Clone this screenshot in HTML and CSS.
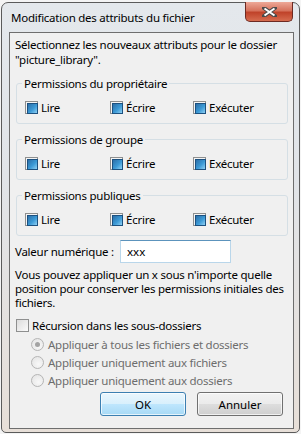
FILE: index.html
```html
<!DOCTYPE html>
<html lang="fr">
<head>
    <meta charset="UTF-8">
    <title>Modification des attributs du fichier</title>
    <link rel="stylesheet" href="styles.css">
</head>
<body>
    <div class="window">
        <div class="titlebar">
            <span class="title">Modification des attributs du fichier</span>
            <button class="close" title="Fermer">
                <svg width="15" height="10" viewBox="0 0 15 10">
                    <path d="M2 1 L13 9 M13 1 L2 9" stroke="#4a4a4a" stroke-width="4" stroke-linecap="square"/>
                    <path d="M2.5 1.5 L12.5 8.5 M12.5 1.5 L2.5 8.5" stroke="#ffffff" stroke-width="2"/>
                </svg>
            </button>
        </div>

        <div class="client">
            <p class="intro">Sélectionnez les nouveaux attributs pour le dossier<br>"picture_library".</p>

            <fieldset class="group">
                <legend>Permissions du propriétaire</legend>
                <div class="perms">
                    <label class="check"><span class="box on"></span>Lire</label>
                    <label class="check"><span class="box on"></span>Écrire</label>
                    <label class="check"><span class="box on"></span>Exécuter</label>
                </div>
            </fieldset>

            <fieldset class="group">
                <legend>Permissions de groupe</legend>
                <div class="perms">
                    <label class="check"><span class="box on"></span>Lire</label>
                    <label class="check"><span class="box on"></span>Écrire</label>
                    <label class="check"><span class="box on"></span>Exécuter</label>
                </div>
            </fieldset>

            <fieldset class="group">
                <legend>Permissions publiques</legend>
                <div class="perms">
                    <label class="check"><span class="box on"></span>Lire</label>
                    <label class="check"><span class="box on"></span>Écrire</label>
                    <label class="check"><span class="box on"></span>Exécuter</label>
                </div>
            </fieldset>

            <div class="value-row">
                <label class="value-label" for="mode">Valeur numérique :</label>
                <input class="value-input" id="mode" type="text" value="xxx">
            </div>

            <p class="hint">Vous pouvez appliquer un x sous n'importe quelle<br>position pour conserver les permissions initiales des<br>fichiers.</p>

            <label class="check recurse"><span class="box"></span>Récursion dans les sous-dossiers</label>

            <div class="radios">
                <label class="radio"><span class="dot on"></span>Appliquer à tous les fichiers et dossiers</label>
                <label class="radio"><span class="dot"></span>Appliquer uniquement aux fichiers</label>
                <label class="radio"><span class="dot"></span>Appliquer uniquement aux dossiers</label>
            </div>

            <div class="actions">
                <button class="button default">OK</button>
                <button class="button">Annuler</button>
            </div>
        </div>
    </div>
</body>
</html>
```

FILE: styles.css
```css
* {
    margin: 0;
    padding: 0;
    box-sizing: border-box;
}

body {
    font-family: "Noto Sans", "Open Sans", sans-serif;
    font-size: 11.5px;
    letter-spacing: -0.25px;
    line-height: 15px;
    color: #000;
    background: #f4f4f4;
}

/* window frame */
.window {
    width: 299px;
    height: 431px;
    margin: 2px 0 0 1px;
    padding: 0 5px 3px 7px;
    display: flex;
    flex-direction: column;
    border: 1px solid #5b5b5b;
    border-radius: 7px 7px 5px 5px;
    background: linear-gradient(to bottom, #e4e8ec 0%, #e1e4e8 40%, #e7dfd8 100%);
}

.titlebar {
    height: 29px;
    display: flex;
    align-items: flex-start;
    justify-content: space-between;
}

.title {
    padding: 7px 0 0 2px;
    white-space: nowrap;
}

.close {
    width: 48px;
    height: 20px;
    margin-right: 1px;
    margin-top: -1px;
    display: flex;
    align-items: center;
    justify-content: center;
    border: 1px solid #6d2a22;
    border-top: none;
    border-radius: 0 0 5px 5px;
    background: linear-gradient(to bottom, #eda897 0%, #d6735d 45%, #c0432a 55%, #d66c4f 100%);
}

/* dialog body */
.client {
    flex: 1;
    padding: 4px 5px 0 5px;
    border: 1px solid #6e6e6e;
    background: #f0f0f0;
    display: flex;
    flex-direction: column;
}

.intro {
    white-space: nowrap;
}

.group {
    margin: 9px 0 0 1px;
    padding: 9px 8px 8px 8px;
    border: 1px solid #d5dfe5;
    border-radius: 3px;
}

.group + .group {
    margin-top: 8px;
}

.group legend {
    margin-left: -3px;
    padding: 0 2px;
}

.perms {
    display: grid;
    grid-template-columns: 85px 83px auto;
}

.check {
    display: flex;
    align-items: center;
    gap: 3px;
    white-space: nowrap;
}

.box {
    width: 13px;
    height: 13px;
    flex: none;
    border: 1px solid #8e8f8f;
    background: linear-gradient(135deg, #dcdcdc, #fbfbfb);
}

.box.on {
    background: #f4f4f4;
    padding: 1px;
}

.box.on::after {
    content: "";
    display: block;
    width: 9px;
    height: 9px;
    border: 1px solid #1c5180;
    background: linear-gradient(135deg, #2c6fa8 0%, #3c9ad6 55%, #8fd0f3 100%);
}

.value-row {
    margin-top: 4px;
    display: flex;
    align-items: center;
}

.value-label {
    width: 105px;
    white-space: nowrap;
}

.value-input {
    width: 111px;
    height: 23px;
    padding: 0 6px;
    font: inherit;
    border: 1px solid #b9d6ea;
    border-top-color: #5c93bc;
    background: #fff;
    outline: none;
}

.hint {
    margin-top: 5px;
    line-height: 14px;
    white-space: nowrap;
}

.recurse {
    margin: 8px 0 0 1px;
}

.radios {
    margin: 4px 0 0 16px;
    display: flex;
    flex-direction: column;
    gap: 3px;
}

.radio {
    display: flex;
    align-items: center;
    gap: 4px;
    color: #6d6d6d;
    white-space: nowrap;
}

.dot {
    width: 13px;
    height: 13px;
    flex: none;
    border: 1px solid #b5b5b5;
    border-radius: 50%;
    background: radial-gradient(circle at 60% 65%, #f8f8f8 0%, #e2e2e2 100%);
    display: flex;
    align-items: center;
    justify-content: center;
}

.dot.on::after {
    content: "";
    width: 5px;
    height: 5px;
    border-radius: 50%;
    background: #a3a3a3;
}

.actions {
    margin-top: 4px;
    padding-right: 5px;
    display: flex;
    justify-content: flex-end;
    gap: 11px;
}

.button {
    width: 86px;
    height: 24px;
    font: inherit;
    color: #000;
    border: 1px solid #707070;
    border-radius: 3px;
    background: linear-gradient(to bottom, #f2f2f2 0%, #ebebeb 48%, #dddddd 52%, #cfcfcf 100%);
    box-shadow: inset 0 0 0 1px rgba(255, 255, 255, 0.7);
}

.button.default {
    border-color: #3c7fb1;
    background: linear-gradient(to bottom, #eaf6fd 0%, #d9f0fc 48%, #bee6fd 52%, #a7d9f5 100%);
}
```
